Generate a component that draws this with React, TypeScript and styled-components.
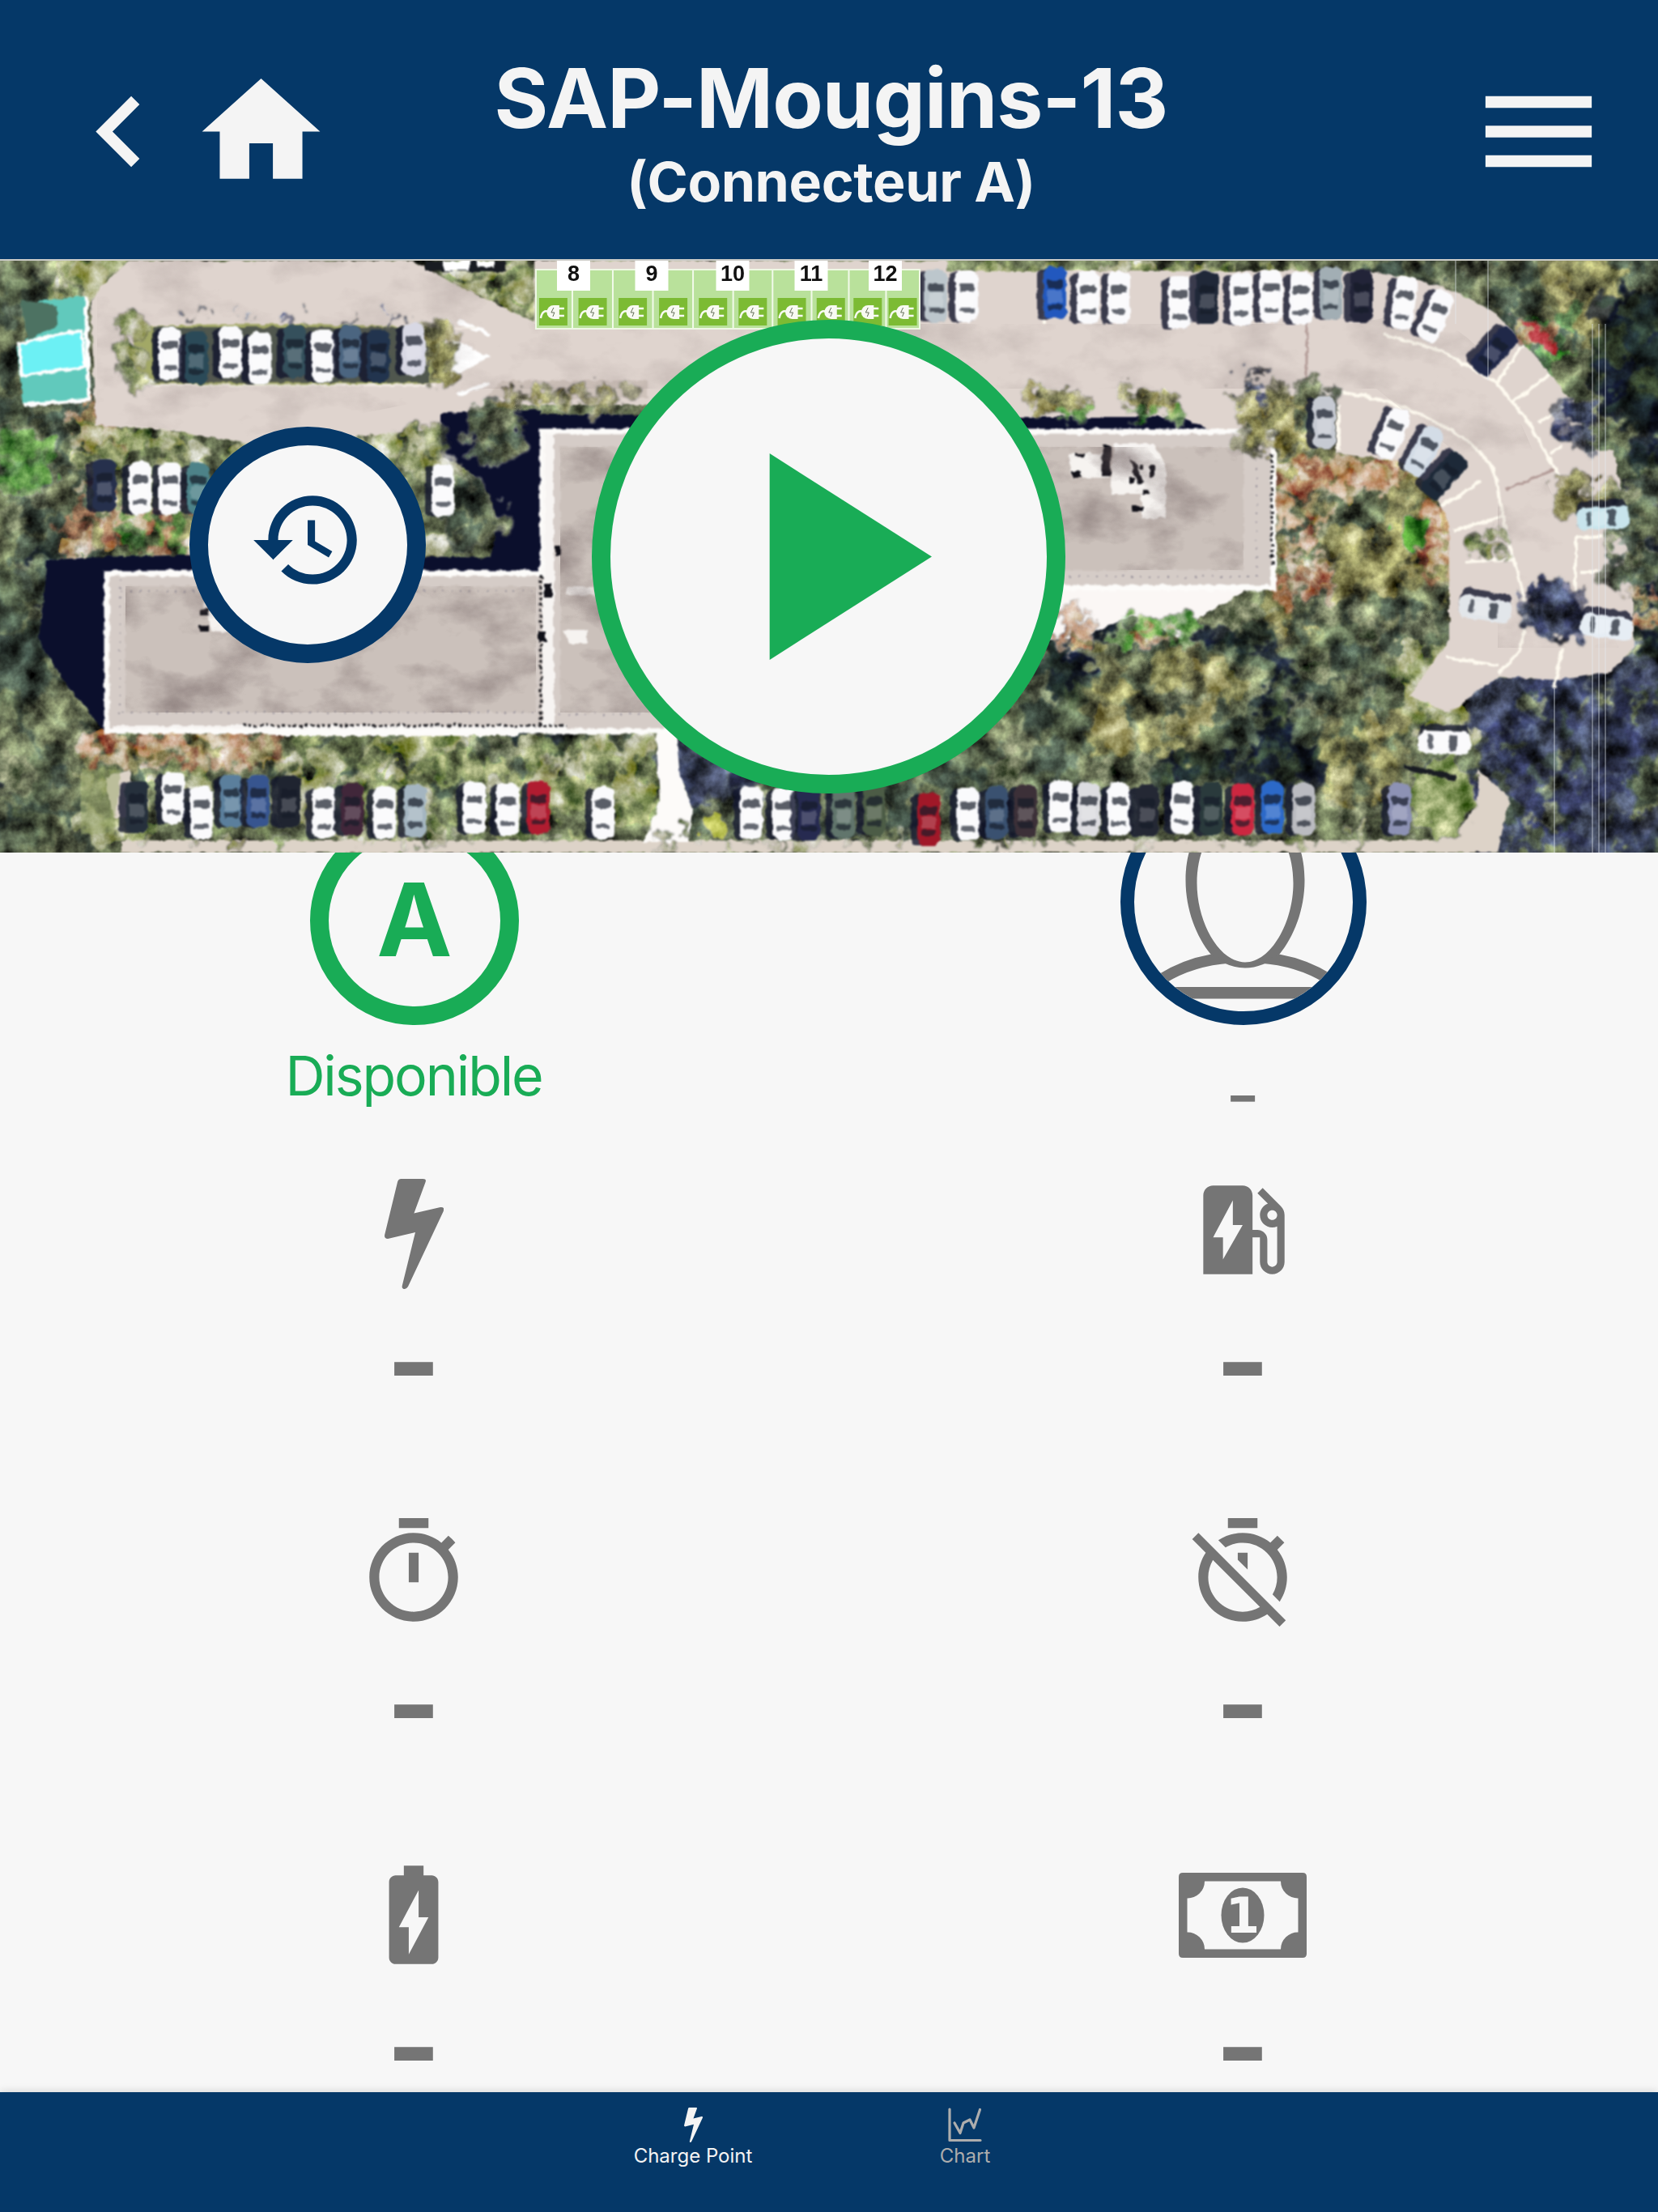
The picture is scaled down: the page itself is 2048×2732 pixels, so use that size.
import React from "react";
import styled, { createGlobalStyle } from "styled-components";

const navy = "#053868";
const green = "#19ac56";
const grey = "#757575";
const paper = "#f7f7f7";

const GlobalStyle = createGlobalStyle`
  * { box-sizing: border-box; }
  body { margin: 0; background: ${paper}; }
  svg { display: block; flex: none; }
`;

const Screen = styled.div`
  width: 2048px;
  height: 2732px;
  display: flex;
  flex-direction: column;
  overflow: hidden;
  background: ${paper};
  font-family: Inter, "Liberation Sans", sans-serif;
`;

const Header = styled.header`
  flex: none;
  height: 322px;
  padding: 0 60px;
  display: flex;
  align-items: center;
  background: ${navy};
  border-bottom: 2px solid #ccccc8;
  color: #f4f4f4;
`;

const HeaderSide = styled.div<{ $end?: boolean }>`
  flex: 1;
  display: flex;
  justify-content: ${(p) => (p.$end ? "flex-end" : "flex-start")};
  padding-top: 5px;
`;

const Titles = styled.div`
  display: flex;
  flex-direction: column;
  align-items: center;
  padding: 5px 0 0 5px;
  white-space: nowrap;
`;

const Title = styled.h1`
  margin: 0;
  font-size: 102px;
  line-height: 122px;
  font-weight: 700;
  letter-spacing: -0.9px;
`;

const Subtitle = styled.h2`
  margin: 0;
  font-size: 68px;
  line-height: 84px;
  font-weight: 700;
  letter-spacing: -0.4px;
`;

const Banner = styled.section`
  flex: none;
  position: relative;
  z-index: 1;
  height: 731px;
  overflow: hidden;
`;

const RoundButton = styled.button<{ $size: number; $left: number; $top: number; $color: string }>`
  position: absolute;
  left: ${(p) => p.$left}px;
  top: ${(p) => p.$top}px;
  width: ${(p) => p.$size}px;
  height: ${(p) => p.$size}px;
  padding: 0;
  display: flex;
  align-items: center;
  justify-content: center;
  border: 23px solid ${(p) => p.$color};
  border-radius: 50%;
  background: ${paper};
  color: ${(p) => p.$color};
`;

const Details = styled.main`
  flex: 1;
  min-height: 0;
  display: grid;
  grid-template-columns: 1fr 1fr;
  grid-template-rows: 392.5px 423.5px 423px 1fr;
`;

const Status = styled.div`
  min-width: 0;
  display: flex;
  flex-direction: column;
  align-items: center;
  justify-content: flex-end;
`;

const Ring = styled.div<{ $size: number; $border: number; $color: string }>`
  flex: none;
  width: ${(p) => p.$size}px;
  height: ${(p) => p.$size}px;
  padding-bottom: ${(p) => (p.$size < 300 ? 3 : 0)}px;
  display: flex;
  align-items: center;
  justify-content: center;
  border: ${(p) => p.$border}px solid ${(p) => p.$color};
  border-radius: 50%;
  overflow: hidden;
  color: ${(p) => p.$color};
  font-size: 125px;
  font-weight: 700;
`;

const StatusLabel = styled.div<{ $color: string; $empty?: boolean }>`
  flex: none;
  height: 180px;
  padding-top: ${(p) => (p.$empty ? 45 : 21)}px;
  padding-right: 2px;
  font-size: ${(p) => (p.$empty ? 94 : 68)}px;
  line-height: 82px;
  letter-spacing: ${(p) => (p.$empty ? 0 : -2.1)}px;
  color: ${(p) => p.$color};
`;

const Metric = styled.div`
  min-height: 0;
  padding-right: 2px;
  display: flex;
  flex-direction: column;
  align-items: center;
  color: ${grey};
`;

const MetricIcon = styled.div<{ $drop: number }>`
  height: 146px;
  padding-top: ${(p) => p.$drop}px;
  display: flex;
  align-items: center;
`;

const MetricValue = styled.div`
  padding-top: 40px;
  font-size: 144px;
  line-height: 100px;
  font-weight: 700;
`;

const TabBar = styled.nav`
  flex: none;
  height: 148px;
  display: flex;
  justify-content: center;
  background: ${navy};
  box-shadow: 0 -1px 10px rgba(0, 0, 0, 0.14);
`;

const Tab = styled.div<{ $active?: boolean }>`
  width: 336px;
  padding-top: 19px;
  display: flex;
  flex-direction: column;
  align-items: center;
  gap: 2px;
  font-size: 24px;
  line-height: 29px;
  color: ${(p) => (p.$active ? "#f4f4f4" : "#adadad")};
`;

const Glyph = ({ d, size }: { d: string; size: number }) => (
  <svg width={size} height={size} viewBox="0 0 24 24" fill="currentColor">
    <path d={d} />
  </svg>
);

const icons = {
  back: "M15.41 7.41L14 6l-6 6 6 6 1.41-1.41L10.83 12z",
  home: "M10 20v-6h4v6h5v-8h3L12 3 2 12h3v8z",
  menu: "M3 18h18v-2H3v2zm0-5h18v-2H3v2zm0-7v2h18V6H3z",
  play: "M8 5v14l11-7z",
  history:
    "M13 3c-4.97 0-9 4.03-9 9H1l3.89 3.89.07.14L9 12H6c0-3.87 3.13-7 7-7s7 3.13 7 7-3.13 7-7 7c-1.93 0-3.68-.79-4.94-2.06l-1.42 1.42C8.27 19.99 10.51 21 13 21c4.97 0 9-4.03 9-9s-4.03-9-9-9zm-1 5v5l4.28 2.54.72-1.21-3.5-2.08V8H12z",
  station:
    "M19.77 7.23l.01-.01-3.72-3.72L15 4.56l2.11 2.11c-.94.36-1.61 1.26-1.61 2.33 0 1.38 1.12 2.5 2.5 2.5.36 0 .69-.08 1-.21v7.21c0 .55-.45 1-1 1s-1-.45-1-1V14c0-1.1-.9-2-2-2h-1V5c0-1.1-.9-2-2-2H6c-1.1 0-2 .9-2 2v16h10v-7.5h1.5v5c0 1.38 1.12 2.5 2.5 2.5s2.5-1.12 2.5-2.5V9c0-.69-.28-1.32-.73-1.77zM18 10c-.55 0-1-.45-1-1s.45-1 1-1 1 .45 1 1-.45 1-1 1zM8 18v-4.5H6L10 6v5h2l-4 7z",
  timer:
    "M15 1H9v2h6V1zm-4 13h2V8h-2v6zm8.03-6.61l1.42-1.42c-.43-.51-.9-.99-1.41-1.41l-1.42 1.42C16.07 4.74 14.12 4 12 4c-4.97 0-9 4.03-9 9s4.02 9 9 9 9-4.03 9-9c0-2.12-.74-4.07-1.97-5.61zM12 20c-3.87 0-7-3.13-7-7s3.13-7 7-7 7 3.13 7 7-3.13 7-7 7z",
  timerOff:
    "M19.04 4.55l-1.42 1.42C16.07 4.74 14.12 4 12 4c-1.83 0-3.53.55-4.95 1.48l1.46 1.46C9.53 6.35 10.73 6 12 6c3.87 0 7 3.13 7 7 0 1.27-.35 2.47-.94 3.49l1.45 1.45C20.45 16.53 21 14.83 21 13c0-2.12-.74-4.07-1.97-5.61l1.42-1.42-1.41-1.42zM15 1H9v2h6V1zm-4 8.44l2 2V8h-2v1.44zM3.02 4L1.75 5.27 4.5 8.03C3.55 9.45 3 11.16 3 13c0 4.97 4.02 9 9 9 1.84 0 3.55-.55 4.98-1.5l2.5 2.5 1.27-1.27-7.71-7.71L3.02 4zM12 20c-3.87 0-7-3.13-7-7 0-1.28.35-2.48.95-3.52l9.56 9.56c-1.03.61-2.23.96-3.51.96z",
  battery:
    "M15.67 4H14V2h-4v2H8.33C7.6 4 7 4.6 7 5.33v15.33C7 21.4 7.6 22 8.33 22h7.33c.74 0 1.34-.6 1.34-1.33V5.33C17 4.6 16.4 4 15.67 4zM11 20v-5.5H9L13 7v5.5h2L11 20z",
};

const Flash = ({ width, height }: { width: number; height: number }) => (
  <svg width={width} height={height} viewBox="0 0 73 136" preserveAspectRatio="none" fill="currentColor">
    <path d="M20.5 0H47.5Q52.5 0 50.2 5L36.4 42.5 69 35Q75 34.5 72.5 40.5L29 133Q27 136 25 136 20.5 136 22 131L38 66 4 74Q-1 74 .3 68.5L16 4Q17 0 20.5 0Z" />
  </svg>
);

const Banknote = () => (
  <svg width="158" height="105" viewBox="0 0 158 105">
    <path
      fill="currentColor"
      fillRule="evenodd"
      d="M5 0H153Q158 0 158 5V100Q158 105 153 105H5Q0 105 0 100V5Q0 0 5 0ZM32 10.5A21 21 0 0 1 10.5 31.5V73.5A21 21 0 0 1 32 94.5H126A21 21 0 0 1 147.5 73.5V31.5A21 21 0 0 1 126 10.5Z"
    />
    <ellipse cx="79" cy="52.5" rx="26.5" ry="34" fill="currentColor" />
    <text x="79" y="74" textAnchor="middle" fontFamily="DejaVu Sans" fontWeight="700" fontSize="61" fill={paper}>
      1
    </text>
  </svg>
);

const Person = () => (
  <svg width="269" height="269" viewBox="0 0 269 269" fill={grey}>
    <path
      fillRule="evenodd"
      d="M62.5 108C62.5 50 95 14 136 14S209.5 50 209.5 108C209.5 145 196 178 178.5 199.5Q158 216.5 136 216.5T93.5 199.5C76 178 62.5 145 62.5 108ZM76.5 112C76.5 160 104 209.5 136 209.5S195.5 160 195.5 112C195.5 60 168 28 136 28S76.5 60 76.5 112Z"
    />
    <path d="M94 199.5Q58 206 28 225L38 235Q72 214 118 210.5ZM178 199.5Q214 206 244 225L234 235Q200 214 154 210.5ZM0 240H269V254.5H0Z" />
  </svg>
);

const ChartIcon = () => (
  <svg width="42" height="43" viewBox="0 0 42 43" fill="none" stroke="currentColor" strokeWidth="3.2" strokeLinecap="round" strokeLinejoin="round">
    <path d="M2 2V40.5H40M8 19L15 31.5 19 19 27 15 32 25 39.5 2.5" />
  </svg>
);

/* ---- aerial view of the car park ---- */

const makeRandom = (seed: number) => {
  let s = seed;
  return () => {
    s = (s * 16807) % 2147483647;
    return s / 2147483647;
  };
};

const palettes: Record<string, string[]> = {
  forest: ["#56624a", "#737c5b", "#45544a", "#848b6c", "#36443c", "#636f54"],
  grass: ["#97a569", "#b6b98b", "#7f8d5b", "#c8c6a6", "#65734c"],
  dark: ["#141a2c", "#1f2c2c", "#2c3c30", "#0c1024", "#39472f"],
  autumn: ["#c99a7e", "#b07a56", "#e0c0a6", "#96664e", "#d4c3a4", "#8c8a5c"],
  dusk: ["#32385a", "#2d334c", "#4c566c", "#424a60", "#242844"],
  vivid: ["#6fa850", "#5f9648", "#86bb66", "#568450"],
  olive: ["#96935c", "#7c7c55", "#aaa36c", "#6c6e4a"],
};

type Patch = [number, number, number, number, string, number, number];

const Foliage = ({ patches, seed }: { patches: Patch[]; seed: number }) => {
  const rnd = makeRandom(seed);
  return (
    <g>
      {patches.map(([x, y, w, h, name, count, radius], p) =>
        Array.from({ length: count }, (_, i) => {
          const colors = palettes[name];
          return (
            <ellipse
              key={`${p}-${i}`}
              cx={Math.round(x + rnd() * w)}
              cy={Math.round(y + rnd() * h)}
              rx={Math.round(radius * (0.4 + rnd() * 0.8))}
              ry={Math.round(radius * (0.4 + rnd() * 0.7))}
              fill={colors[Math.floor(rnd() * colors.length)]}
              opacity={0.72}
            />
          );
        })
      )}
    </g>
  );
};

const ground: Patch[] = [
  [0, 322, 110, 190, "forest", 70, 18],
  [60, 322, 90, 50, "grass", 30, 14],
  [0, 490, 120, 240, "forest", 90, 22],
  [90, 480, 60, 140, "autumn", 25, 13],
  [0, 700, 60, 353, "dark", 20, 22],
  [0, 700, 110, 353, "forest", 120, 26],
  [100, 525, 520, 60, "grass", 150, 13],
  [250, 600, 300, 80, "grass", 60, 14],
  [80, 625, 180, 55, "autumn", 60, 13],
  [150, 635, 90, 45, "vivid", 12, 14],
  [110, 905, 700, 70, "forest", 150, 18],
  [640, 905, 60, 60, "dark", 20, 16],
  [105, 905, 250, 38, "autumn", 90, 12],
  [100, 950, 720, 90, "grass", 110, 16],
  [350, 905, 240, 70, "grass", 50, 18],
  [650, 910, 160, 90, "grass", 60, 17],
  [820, 920, 480, 110, "forest", 160, 22],
  [820, 920, 100, 60, "dusk", 35, 20],
  [1180, 740, 620, 250, "forest", 420, 27],
  [1290, 740, 70, 120, "dark", 40, 24],
  [1480, 775, 120, 60, "dark", 30, 20],
  [1550, 860, 60, 60, "dark", 20, 20],
  [1450, 915, 180, 50, "dark", 50, 20],
  [1350, 800, 200, 120, "forest", 140, 25],
  [1340, 800, 190, 120, "olive", 30, 22],
  [1220, 330, 500, 15, "grass", 50, 12],
  [1540, 480, 100, 80, "olive", 50, 18],
  [1580, 560, 210, 230, "olive", 150, 20],
  [1590, 600, 110, 80, "forest", 50, 20],
  [1640, 660, 110, 90, "olive", 60, 20],
  [1575, 570, 60, 170, "autumn", 50, 12],
  [1600, 570, 150, 40, "autumn", 60, 12],
  [1760, 620, 50, 120, "autumn", 50, 12],
  [1600, 730, 190, 210, "forest", 160, 20],
  [1730, 800, 110, 110, "grass", 70, 16],
  [1640, 890, 90, 90, "olive", 30, 18],
  [1700, 322, 348, 130, "forest", 180, 20],
  [1910, 322, 90, 90, "olive", 50, 18],
  [1870, 390, 80, 70, "vivid", 18, 14],
  [1950, 440, 98, 613, "forest", 220, 24],
  [1985, 370, 70, 150, "dark", 110, 22],
  [2020, 540, 40, 300, "dark", 40, 18],
  [1830, 830, 140, 220, "dusk", 200, 22],
  [1850, 860, 110, 180, "forest", 26, 14],
  [1960, 820, 88, 233, "dusk", 50, 22],
  [560, 322, 100, 60, "grass", 40, 12],
];

const canopy: Patch[] = [
  [150, 390, 30, 85, "grass", 26, 12],
  [528, 402, 28, 66, "olive", 26, 13],
  [215, 385, 300, 16, "dusk", 24, 5],
  [585, 500, 50, 60, "forest", 50, 15],
  [550, 600, 60, 70, "forest", 46, 17],
  [500, 530, 50, 60, "grass", 28, 14],
  [0, 540, 55, 60, "vivid", 26, 18],
  [620, 480, 160, 28, "olive", 36, 10],
  [1270, 484, 72, 22, "olive", 30, 9],
  [1380, 484, 76, 22, "olive", 32, 9],
  [1290, 505, 50, 12, "vivid", 8, 8],
  [1390, 505, 70, 12, "vivid", 10, 8],
  [1540, 480, 80, 70, "olive", 54, 14],
  [1520, 450, 40, 50, "dusk", 20, 6],
  [1600, 465, 50, 60, "forest", 24, 12],
  [1390, 765, 80, 30, "vivid", 22, 13],
  [1400, 775, 60, 30, "autumn", 10, 9],
  [1310, 745, 40, 60, "autumn", 20, 10],
  [1590, 690, 60, 50, "autumn", 34, 10],
  [1890, 725, 65, 55, "dusk", 60, 16],
  [1800, 655, 60, 30, "grass", 14, 9],
  [1920, 590, 70, 40, "olive", 24, 13],
  [1925, 500, 40, 50, "dusk", 26, 14],
  [1875, 395, 50, 30, "autumn", 12, 11],
  [1990, 600, 58, 120, "forest", 50, 16],
  [2010, 730, 38, 40, "autumn", 16, 11],
  [150, 1024, 1600, 18, "grass", 90, 8],
];

type CarSpec = [number, number, string, number?, number?];

const W = "#fafafc";
const cars: CarSpec[] = [
  [210, 437, W], [243, 442, "#2b4a58"], [285, 435, W], [321, 443, W], [364, 435, "#35505c"], [399, 440, W],
  [433, 435, "#4b6580"], [467, 440, "#22344e"], [511, 432, "#d8d8e4"],
  [129, 600, "#26304c"], [173, 603, W], [210, 604, W], [245, 604, "#4d8288"], [547, 606, W],
  [169, 997, "#26303c"], [214, 986, W], [249, 1004, W], [286, 990, "#5b7f9c"], [319, 990, "#37558f"], [357, 990, "#1f2430"],
  [400, 1004, W], [435, 1000, "#41273a"], [475, 1004, W], [513, 1002, "#a4b5c0"], [586, 998, W], [627, 1000, W],
  [665, 998, "#b01c30"], [745, 1004, W], [928, 1004, W], [968, 1006, W], [999, 1006, "#262a50"], [1042, 1004, "#61756c"],
  [1080, 1000, "#4c5c46"], [1147, 1012, "#a01828"], [1196, 1006, W], [1231, 1004, "#3a5170"], [1267, 1002, "#3c3038"], [1310, 996, W],
  [1345, 1000, "#dcdce0"], [1382, 1000, W], [1417, 1002, "#242834"], [1460, 998, W], [1496, 1000, "#2a3a3c"],
  [1535, 1000, "#cc2740"], [1572, 998, "#2c69c8"], [1610, 1000, "#babbc0"], [1729, 1000, "#8d92b4"],
  [1156, 366, "#bcc6cc"], [1194, 366, W], [1303, 362, "#2258be"], [1344, 368, W], [1382, 368, W], [1457, 374, W],
  [1491, 368, "#202838"], [1533, 370, W], [1570, 366, W], [1607, 369, W], [1644, 362, "#a2aeb4"], [1682, 366, "#222438"],
  [1734, 375, W, 8], [1773, 391, W, 24], [1846, 434, "#202848", 42],
  [1720, 536, W, 22], [1759, 558, "#d3dce6", 28], [1784, 588, "#1d2938", 42], [1636, 522, "#c6cad2"],
  [1834, 752, "#e2e6ea", 100], [1984, 774, "#e6edf4", 98], [1980, 640, "#c8e4ec", 86], [1784, 917, W, 92],
];

const Car = ({ spec: [x, y, color, rot = 0] }: { spec: CarSpec }) => (
  <g transform={`translate(${x} ${y}) rotate(${rot})`}>
    <rect x="-22" y="-30" width="34" height="62" rx="7" fill="#10142c" opacity="0.8" />
    <rect x="-14" y="-33" width="28" height="65" rx="9" fill={color} />
    <rect x="-10" y="-16" width="20" height="10" rx="3" fill="#161b28" opacity="0.7" />
    <rect x="-9" y="14" width="18" height="6" rx="2" fill="#161b28" opacity="0.65" />
    <rect x="-9" y="-4" width="18" height="16" fill="#fff" opacity="0.18" />
  </g>
);

const plugX = [58, 167, 278, 390, 500, 610, 718, 826, 928, 1025].map((v) => 640 + v / 2.24);
const dividers = [150, 262, 373, 484, 595, 704, 812, 915, 1018].map((v) => 640 + v / 2.24);
const bays: [string, number][] = [["8", 708.5], ["9", 805], ["10", 905], ["11", 1002], ["12", 1093.5]];

const AerialView = () => (
  <svg width="2048" height="731" viewBox="0 322 2048 731">
    <defs>
      <filter id="leaves" x="-2%" y="-4%" width="104%" height="108%" colorInterpolationFilters="sRGB">
        <feTurbulence type="fractalNoise" baseFrequency="0.05" numOctaves="3" seed="4" result="n" />
        <feDisplacementMap in="SourceGraphic" in2="n" scale="40" xChannelSelector="R" yChannelSelector="G" result="d" />
        <feGaussianBlur in="d" stdDeviation="1.8" result="soft" />
        <feTurbulence type="fractalNoise" baseFrequency="0.035" numOctaves="4" seed="9" />
        <feColorMatrix values="1.25 0 0 0 -.14  1.25 0 0 0 -.14  1.25 0 0 0 -.14  0 0 0 0 1" result="g" />
        <feBlend in="g" in2="soft" mode="overlay" />
        <feComposite in2="soft" operator="in" />
      </filter>
      <filter id="edges" x="-2%" y="-4%" width="104%" height="108%" colorInterpolationFilters="sRGB">
        <feTurbulence type="fractalNoise" baseFrequency="0.1" numOctaves="2" seed="2" />
        <feDisplacementMap in="SourceGraphic" scale="6" xChannelSelector="R" yChannelSelector="G" />
        <feGaussianBlur stdDeviation="0.9" />
      </filter>
      <filter id="mottle" x="0" y="0" width="100%" height="100%" colorInterpolationFilters="sRGB">
        <feTurbulence type="fractalNoise" baseFrequency="0.012 0.018" numOctaves="5" seed="6" />
        <feColorMatrix values="0 0 0 0 .42  0 0 0 0 .36  0 0 0 0 .36  2.4 0 0 0 -1.1" />
        <feComposite in2="SourceGraphic" operator="in" />
      </filter>
    </defs>

    <g filter="url(#leaves)">
      <rect x="-60" y="262" width="2168" height="851" fill="#667052" />
      <Foliage patches={ground} seed={71} />
    </g>

    <g filter="url(#edges)">
      <path
        fill="#dfd4ce"
        d="M112 372Q135 340 160 322H510L560 350 660 398V322H1170V335H1680Q1790 345 1850 390L1910 455 1952 510 1960 558 1992 556 2002 600V650L2018 700V800L1990 830 1925 840 1850 836 1790 880 1740 860 1790 790V650Q1775 600 1730 570L1650 560V490L1540 485V545H1200V500H600L540 530 320 550 200 530 118 526Z"
      />
      <path fill="#ddd3c8" d="M150 1038H1770Q1835 1015 1825 950L1865 985 1850 1053H150ZM130 960 160 950 170 1010 140 1010Z" />
      <path fill="#b5a79e" opacity="0.4" d="M620 470H800V492H600Z" />
      <path fill="#a2a866" d="M165 405Q300 395 550 405V472Q300 480 165 472Z" />
      <path fill="#2d3444" opacity="0.7" d="M190 404H530V472H190Z" />
      <path fill="#fff" d="M560 418 605 441 556 468ZM567 395 606 411 604 415 566 400ZM564 485 603 472 604 476 566 490Z" />
      <path fill="#61c9bc" d="M46 372 105 366 109 494 29 500 20 428 50 405Z" />
      <path fill="#6cf0f4" stroke="#fff" strokeWidth="4" d="M23 424 101 408 105 453 27 464Z" />
      <path fill="none" stroke="#fff" strokeWidth="5" d="M106 366 110 494 29 500" />
      <path fill="#4d7262" d="M25 370 70 378 72 400 35 420Z" />

      <path fill="#0b0f2c" d="M58 692Q200 680 670 690V708H130V905L110 880 78 840 48 790 55 720ZM545 510 668 506V706H600Q640 600 545 565ZM655 512H870L1270 515H1460L1510 538H655Z" />
      <path fill="#9aa86c" opacity="0.5" d="M100 950H150L140 1030H100Z" />
      <path fill="#fbf7f5" d="M1280 726H1545L1470 770 1460 790 1400 760 1330 790H1280Z" />
      <path fill="#fdfbf9" d="M810 903H835L840 960 855 1000 850 1040H795L815 990ZM340 900H640V909H340Z" />
      <path fill="#d5ccc7" stroke="#fdfcfa" strokeWidth="7" d="M132 708H670V533H1573V726H1200V903H132Z" />
      <path fill="#cbc1bb" d="M155 724H662V880H155ZM692 552H1000V880H692ZM1200 552H1536V704H1200Z" />
      <path fill="#fbf8f6" opacity="0.9" d="M670 533H684V900H670ZM1376 548H1425L1440 575V640H1410V610H1372ZM1320 560H1370V590H1325ZM250 745H300V780H262ZM700 724H735V735H700ZM695 778H725V795H705ZM140 896H700V901H140Z" />
      <path fill="none" stroke="#15151a" strokeWidth="3" strokeDasharray="4 3" d="M668 710V896M300 896H700M1571 560V700" />
      <path fill="none" stroke="#9a949c" strokeWidth="2" strokeDasharray="2 9" d="M150 880H660M150 730H660M690 882H800M1200 712H1560M1552 545V710M148 715V890" />
      <path fill="#101018" d="M1362 550H1372V588H1360ZM1325 582H1335V590H1325ZM672 720H681V738H672ZM664 780H675V792H664ZM686 675H693V686H686ZM246 752H258V760H246ZM246 772H258V780H246ZM1395 565 1405 575 1412 595 1406 600ZM1398 625H1412V632H1398ZM1420 575H1426V590H1420ZM1328 560H1340V564H1328ZM1396 590H1401V598H1396ZM1412 605H1420V610H1412ZM1408 575H1412V580H1408Z" />
      <path fill="none" stroke="#fffbf0" strokeWidth="4" d="M1624 485Q1690 480 1767 518T1849 597 1877 717 1851 831M1710 413 1782 434 1849 473 1887 520 1927 590M1946 664V730M1849 473 1882 424M1869 497 1915 462M1900 522 1944 494M1915 560 1930 550M1781 625 1830 594M1796 655 1860 637M1810 694 1870 690M1785 812 1850 822M1946 664 2005 660M1952 706 2015 706M1930 800 1920 850M1653 500V555M1290 335V400" />
      <path fill="none" stroke="#b39c98" strokeWidth="3" d="M1614 400V470M1860 605 1920 580" />
      <path fill="#f7f2ea" opacity="0.7" d="M560 404H590V406H560ZM190 474H540V477H190Z" />
    </g>

    <g filter="url(#mottle)" opacity="0.55">
      <path d="M155 724H662V880H155ZM692 552H1000V880H692ZM1200 552H1536V704H1200Z" />
    </g>
    <g filter="url(#mottle)" opacity="0.22">
      <path d="M120 322H510L660 400H1680Q1800 360 1860 480L2000 800H1850V600L1700 480H600L300 540 120 520Z" />
    </g>
    <g filter="url(#leaves)">
      <rect x="-60" y="262" width="2168" height="851" fill="none" />
      <Foliage patches={canopy} seed={23} />
      <ellipse cx="1744" cy="657" rx="19" ry="25" fill="#4f9a34" />
      <ellipse cx="1780" cy="985" rx="42" ry="48" fill="#8fa066" />
      <path fill="#c0454c" d="M1880 395 1915 410 1922 440 1900 432Z" />
      <ellipse cx="883" cy="1018" rx="14" ry="13" fill="#b6bd50" />
    </g>
    <g filter="url(#edges)">
      {cars.map((spec, i) => (
        <Car key={i} spec={spec} />
      ))}
      <path fill="#191c22" d="M1735 944 1800 958 1796 964 1735 950ZM525 322H625V335H525Z" />
      <path fill="#fff" d="M548 322H580V334H548ZM590 322H610V330H590Z" />
    </g>
    <path stroke="#e8ecf4" strokeWidth="1.5" opacity="0.45" d="M1967 400V1053M1975 400V1053M1983 400V1053M1838 322V470M1798 322V400M1920 850V1053" />

    <rect x="662" y="333" width="474" height="73" fill="#b9e19b" stroke="#eef8e4" strokeWidth="2" />
    {dividers.map((x) => (
      <rect key={x} x={x - 1} y="334" width="2" height="71" fill="#f2faea" />
    ))}
    {plugX.map((x) => (
      <g key={x}>
        <rect x={x} y="368" width="35" height="34" fill="#7cbb33" />
        <path
          d={`M${x + 2} 393Q${x + 4} 382 ${x + 12} 385M${x + 24} 381H${x + 31}M${x + 24} 390H${x + 31}`}
          stroke="#f8faf2"
          strokeWidth="2.5"
          fill="none"
        />
        <path d={`M${x + 18} 377H${x + 25}V394H${x + 18}A8.5 8.5 0 0 1 ${x + 18} 377Z`} fill="#f8faf2" />
        <path d={`M${x + 18} 380 ${x + 15} 386H${x + 19}L${x + 17} 391`} stroke="#66715c" fill="none" />
      </g>
    ))}
    {bays.map(([label, x]) => (
      <g key={label}>
        <rect x={x - 20.5} y="322" width="41" height="37" fill="#fff" />
        <text x={x} y="347" textAnchor="middle" fontFamily="Liberation Sans" fontWeight="700" fontSize="27" fill="#111">
          {label}
        </text>
      </g>
    ))}
  </svg>
);

const MetricCell = ({ icon, drop = 0 }: { icon: React.ReactNode; drop?: number }) => (
  <Metric>
    <MetricIcon $drop={drop}>{icon}</MetricIcon>
    <MetricValue>-</MetricValue>
  </Metric>
);

export default function App() {
  return (
    <Screen>
      <GlobalStyle />
      <Header>
        <HeaderSide>
          <Glyph d={icons.back} size={175} />
          <Glyph d={icons.home} size={175} />
        </HeaderSide>
        <Titles>
          <Title>SAP-Mougins-13</Title>
          <Subtitle>(Connecteur A)</Subtitle>
        </Titles>
        <HeaderSide $end>
          <Glyph d={icons.menu} size={175} />
        </HeaderSide>
      </Header>
      <Banner>
        <AerialView />
        <RoundButton $size={292} $left={234} $top={205} $color={navy}>
          <svg width="146" height="158" viewBox="0 0 24 26" fill="currentColor">
            <path d={icons.history} />
          </svg>
        </RoundButton>
        <RoundButton $size={585} $left={731} $top={73} $color={green}>
          <Glyph d={icons.play} size={437} />
        </RoundButton>
      </Banner>
      <Details>
        <Status>
          <Ring $size={258} $border={23} $color={green}>A</Ring>
          <StatusLabel $color={green}>Disponible</StatusLabel>
        </Status>
        <Status>
          <Ring $size={304} $border={17.5} $color={navy}>
            <Person />
          </Ring>
          <StatusLabel $color={grey} $empty>-</StatusLabel>
        </Status>
        <MetricCell icon={<Flash width={73} height={136} />} drop={10} />
        <MetricCell icon={<Glyph d={icons.station} size={146} />} />
        <MetricCell icon={<Glyph d={icons.timer} size={146} />} />
        <MetricCell icon={<Glyph d={icons.timerOff} size={146} />} />
        <MetricCell icon={<Glyph d={icons.battery} size={146} />} />
        <MetricCell icon={<Banknote />} />
      </Details>
      <TabBar>
        <Tab $active>
          <Flash width={23} height={43} />
          Charge Point
        </Tab>
        <Tab>
          <ChartIcon />
          Chart
        </Tab>
      </TabBar>
    </Screen>
  );
}
